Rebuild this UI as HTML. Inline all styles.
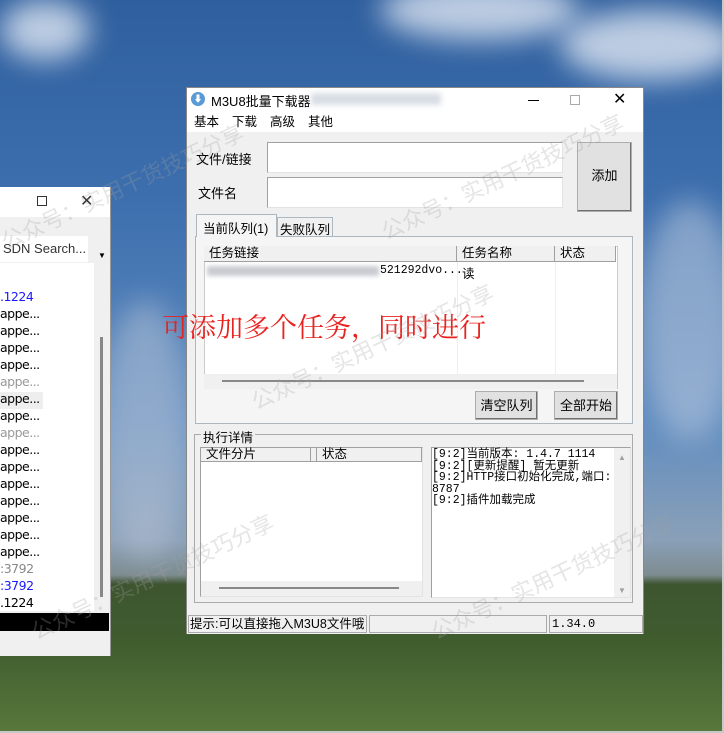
<!DOCTYPE html>
<html><head><meta charset="utf-8"><style>
*{margin:0;padding:0;box-sizing:border-box}
body{width:724px;height:733px;overflow:hidden;position:relative;font-family:"Liberation Sans","Noto Sans CJK SC",sans-serif;font-size:12px;color:#000;
background:linear-gradient(#2f5f9e 0,#3d6fae 200px,#5f8cc0 420px,#8aa0b8 540px,#7d8c90 575px,#3e5530 584px,#3f5c2e 640px,#58783c 733px);}
.abs{position:absolute}
.cloud{position:absolute;border-radius:50%;background:rgba(235,240,248,.75);filter:blur(14px)}
.win{position:absolute;background:#f0f0f0;border:1px solid #888}
.sunk{position:absolute;background:#fff;border-top:1px solid #a0a0a0;border-left:1px solid #a0a0a0;border-right:1px solid #e3e3e3;border-bottom:1px solid #e3e3e3}
.btn{position:absolute;background:#e1e1e1;border:1px solid #adadad;box-shadow:inset -1px -1px #707070;text-align:center;font-size:13px}
.hdr{position:absolute;background:#f0f0f0;border-right:1px solid #a0a0a0;border-bottom:1px solid #a0a0a0;font-size:12.5px;padding-left:5px;line-height:15px}
.mono{font-family:"Liberation Mono","Noto Sans CJK SC",monospace;font-size:11px;line-height:11.5px}
.li{position:absolute;left:0;font-size:12.5px;font-family:"DejaVu Sans",sans-serif;letter-spacing:-.5px}
.wm{position:absolute;color:rgba(160,160,160,.28);font-size:22px;transform:rotate(-25deg);white-space:nowrap;font-family:"Noto Sans CJK SC",sans-serif}
</style></head><body>
<div class="cloud" style="left:380px;top:-20px;width:200px;height:60px"></div>
<div class="cloud" style="left:560px;top:10px;width:180px;height:70px"></div>
<div class="cloud" style="left:0;top:0;width:90px;height:60px"></div>
<div class="cloud" style="left:640px;top:200px;width:100px;height:240px;background:rgba(200,210,225,.5)"></div>
<div class="cloud" style="left:100px;top:300px;width:90px;height:260px;background:rgba(190,200,215,.5)"></div>

<div class="abs" style="left:0;top:187px;width:111px;height:469px;background:#f0f0f0;border-right:1px solid #999">
 <div class="abs" style="left:0;top:0;width:110px;height:30px;background:#fff"></div>
 <div class="abs" style="left:37px;top:9px;width:10px;height:10px;border:1px solid #333"></div>
 <div class="abs" style="left:80px;top:4px;font-size:16px;color:#333">✕</div>
 <div class="abs" style="left:0;top:49px;width:88px;height:26px;background:#fff"></div>
 <div class="abs" style="left:3px;top:54px;font-size:13px;color:#333">SDN Search...</div>
 <div class="abs" style="left:98px;top:64px;font-size:8px">▼</div>
 <div class="abs" style="left:0;top:76px;width:110px;height:348px;background:#fff"></div>
 <div class="abs" style="left:94px;top:76px;width:16px;height:348px;background:#f0f0f0"></div>
 <div class="abs" style="left:100px;top:150px;width:3px;height:260px;background:#888"></div>
 <div class="abs" style="left:0;top:205px;width:43px;height:17px;background:#eee"></div>
 <div class="abs" style="left:0;top:102px;width:100px;height:320px">
  <div class="li" style="top:0;color:#1a1aff">.1224</div>
  <div class="li" style="top:17px">appe...</div>
  <div class="li" style="top:34px">appe...</div>
  <div class="li" style="top:51px">appe...</div>
  <div class="li" style="top:68px">appe...</div>
  <div class="li" style="top:85px;color:#999">appe...</div>
  <div class="li" style="top:102px">appe...</div>
  <div class="li" style="top:119px">appe...</div>
  <div class="li" style="top:136px;color:#999">appe...</div>
  <div class="li" style="top:153px">appe...</div>
  <div class="li" style="top:170px">appe...</div>
  <div class="li" style="top:187px">appe...</div>
  <div class="li" style="top:204px">appe...</div>
  <div class="li" style="top:221px">appe...</div>
  <div class="li" style="top:238px">appe...</div>
  <div class="li" style="top:255px">appe...</div>
  <div class="li" style="top:272px;color:#888">:3792</div>
  <div class="li" style="top:289px;color:#1a1aff">:3792</div>
  <div class="li" style="top:306px">.1224</div>
 </div>
 <div class="abs" style="left:0;top:426px;width:109px;height:18px;background:#000"></div>
</div>

<div class="win" style="left:186px;top:87px;width:458px;height:547px">
 <div class="abs" style="left:0;top:0;width:456px;height:24px;background:#fff"></div>
 <div class="abs" style="left:4px;top:4px;width:14px;height:14px;border-radius:50%;background:#5b9bd5;color:#fff;font-size:9px;text-align:center;line-height:14px">⬇</div>
 <div class="abs" style="left:24px;top:3px;font-size:13px">M3U8批量下载器</div>
 <div class="abs" style="left:124px;top:5px;width:130px;height:12px;background:#d8dde4;filter:blur(3px)"></div>
 <div class="abs" style="left:341px;top:12px;width:11px;height:1px;background:#000"></div>
 <div class="abs" style="left:383px;top:7px;width:10px;height:10px;border:1px solid #aaa"></div>
 <div class="abs" style="left:426px;top:1px;font-size:16px">✕</div>
 <div class="abs" style="left:0;top:24px;width:456px;height:20px;background:#fff;font-size:12.5px;line-height:20px">
  <span class="abs" style="left:7px">基本</span><span class="abs" style="left:45px">下载</span><span class="abs" style="left:83px">高级</span><span class="abs" style="left:121px">其他</span>
 </div>
 <div class="abs" style="left:9px;top:61px;font-size:13px">文件/链接</div>
 <div class="abs" style="left:11px;top:95px;font-size:13px">文件名</div>
 <div class="sunk" style="left:80px;top:54px;width:296px;height:31px"></div>
 <div class="sunk" style="left:80px;top:89px;width:296px;height:31px"></div>
 <div class="btn" style="left:390px;top:54px;width:55px;height:70px;line-height:66px">添加</div>
 <div class="abs" style="left:8px;top:148px;width:438px;height:188px;border:1px solid #adb7c0;background:#f5f5f5"></div>
 <div class="abs" style="left:9px;top:126px;width:81px;height:23px;border:1px solid #adb7c0;border-bottom:none;background:#f5f5f5;font-size:12.5px;padding:3px 0 0 6px">当前队列(1)</div>
 <div class="abs" style="left:90px;top:129px;width:56px;height:20px;border:1px solid #adb7c0;background:#f0f0f0;font-size:12.5px;padding:1px 0 0 2px">失败队列</div>
 <div class="abs" style="left:17px;top:158px;width:414px;height:143px;background:#fff;border:1px solid #ccc"></div>
 <div class="hdr" style="left:17px;top:158px;width:253px;height:16px">任务链接</div>
 <div class="hdr" style="left:270px;top:158px;width:98px;height:16px">任务名称</div>
 <div class="hdr" style="left:368px;top:158px;width:61px;height:16px">状态</div>
 <div class="abs" style="left:270px;top:174px;width:1px;height:112px;background:#eee"></div>
 <div class="abs" style="left:368px;top:174px;width:1px;height:112px;background:#eee"></div>
 <div class="abs" style="left:20px;top:178px;width:172px;height:10px;background:#c9ccd2;filter:blur(2px)"></div>
 <div class="abs mono" style="left:193px;top:177px;font-size:11.5px">521292dvo...</div>
 <div class="abs" style="left:275px;top:175px;font-size:12.5px">读</div>
 <div class="abs" style="left:17px;top:286px;width:413px;height:15px;background:#f0f0f0"></div>
 <div class="abs" style="left:35px;top:292px;width:362px;height:2px;background:#888"></div>
 <div class="btn" style="left:288px;top:303px;width:63px;height:29px;line-height:27px">清空队列</div>
 <div class="btn" style="left:367px;top:303px;width:64px;height:29px;line-height:27px">全部开始</div>
 <div class="abs" style="left:7px;top:346px;width:439px;height:169px;border:1px solid #aaa"></div>
 <div class="abs" style="left:14px;top:339px;background:#f0f0f0;padding:0 2px;font-size:12.5px">执行详情</div>
 <div class="sunk" style="left:13px;top:359px;width:223px;height:150px"></div>
 <div class="hdr" style="left:14px;top:360px;width:110px;height:14px;line-height:13px">文件分片</div>
 <div class="hdr" style="left:124px;top:360px;width:6px;height:14px;padding:0"></div>
 <div class="hdr" style="left:130px;top:360px;width:105px;height:14px;line-height:13px">状态</div>
 <div class="abs" style="left:14px;top:493px;width:221px;height:15px;background:#f0f0f0"></div>
 <div class="abs" style="left:32px;top:499px;width:180px;height:2px;background:#888"></div>
 <div class="sunk" style="left:244px;top:359px;width:200px;height:151px"></div>
 <div class="abs" style="left:427px;top:360px;width:16px;height:149px;background:#f0f0f0;color:#a0a0a0;font-size:8px;text-align:center">
  <div style="margin-top:5px">▲</div><div style="margin-top:124px">▼</div></div>
 <div class="abs mono" style="left:245px;top:361px;font-size:11.5px;line-height:11.5px">[9:2]当前版本: 1.4.7 1114<br>[9:2][更新提醒] 暂无更新<br>[9:2]HTTP接口初始化完成,端口:<br>8787<br>[9:2]插件加载完成</div>
 <div class="abs" style="left:0;top:525px;width:456px;height:21px;background:#f0f0f0"></div>
 <div class="abs" style="left:1px;top:527px;width:179px;height:18px;border:1px solid #aaa;font-size:12.5px;line-height:16px;padding-left:1px">提示:可以直接拖入M3U8文件哦</div>
 <div class="abs" style="left:182px;top:527px;width:178px;height:18px;border:1px solid #aaa"></div>
 <div class="abs mono" style="left:362px;top:527px;width:94px;height:18px;border:1px solid #aaa;font-size:12px;line-height:16px;padding-left:2px">1.34.0</div>
</div>

<div class="abs" style="left:162px;top:306px;color:#e8221f;font-size:27px;font-family:'Noto Serif CJK SC',serif;white-space:nowrap">可添加多个任务，同时进行</div>

<div class="wm" style="left:-10px;top:170px">公众号：实用干货技巧分享</div>
<div class="wm" style="left:370px;top:160px">公众号：实用干货技巧分享</div>
<div class="wm" style="left:240px;top:330px">公众号：实用干货技巧分享</div>
<div class="wm" style="left:20px;top:560px">公众号：实用干货技巧分享</div>
<div class="wm" style="left:420px;top:560px">公众号：实用干货技巧分享</div>
<div class="abs" style="left:0;top:0;width:724px;height:733px;border:2px solid #c8c8c8;border-top:none;border-left:none"></div>
</body></html>
